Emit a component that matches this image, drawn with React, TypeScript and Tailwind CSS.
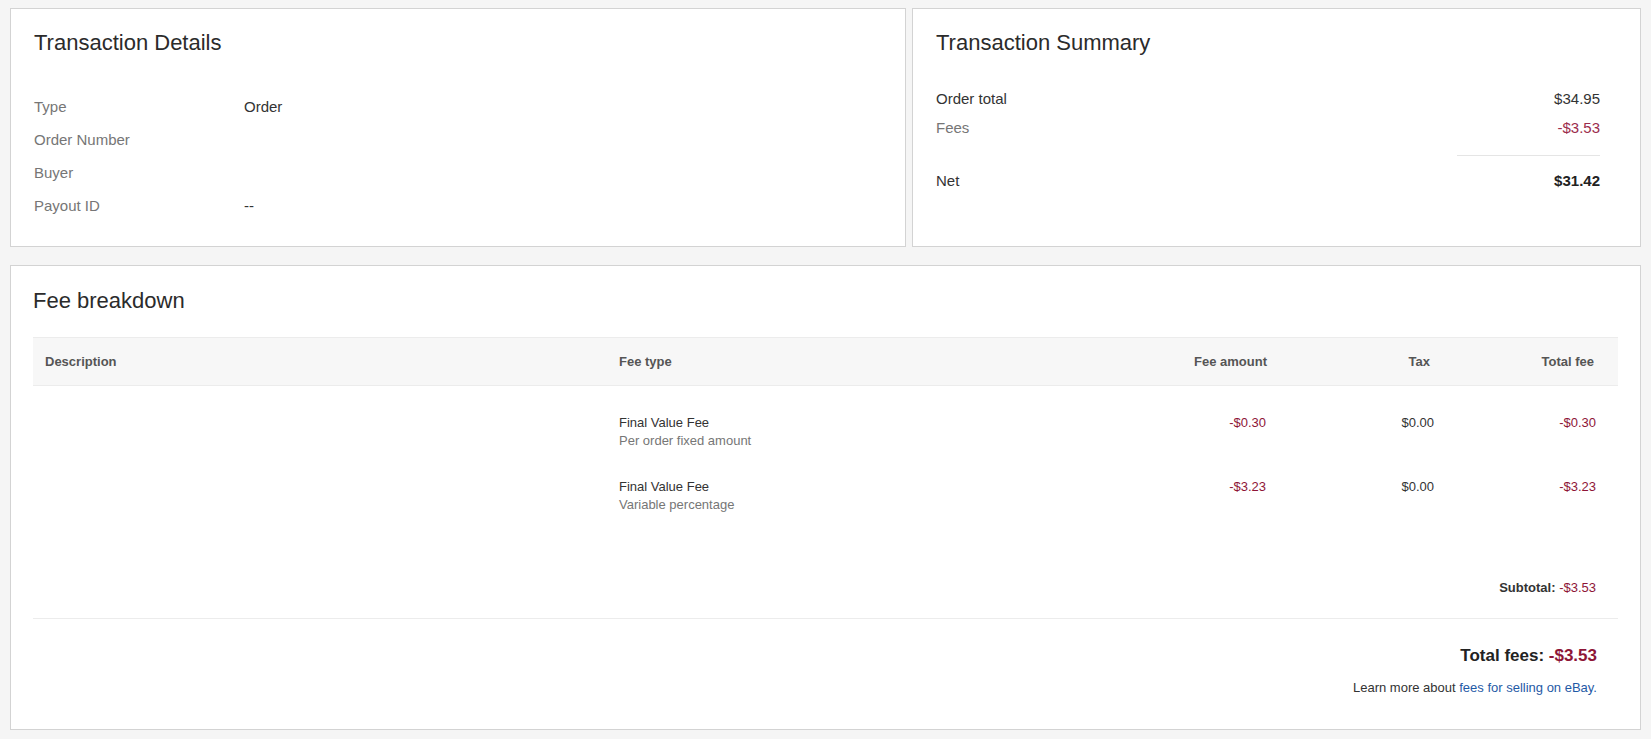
import React from "react";

const RED = "text-[#8e1537]";

function DetailRow({ label, value }: { label: string; value?: string }) {
  return (
    <div className="flex h-[33px] items-center text-[15px]">
      <div className="w-[210px] text-[#767676]">{label}</div>
      <div className="text-[#333333]">{value}</div>
    </div>
  );
}

function FeeRow({ amount }: { amount: { type: string; sub: string; fee: string; tax: string; total: string } }) {
  return (
    <div className="grid grid-cols-[574px_393px_279px_163px_1fr] pt-[11px] pb-[17px] text-[13px] leading-[18px]">
      <div className="pl-3"></div>
      <div className="pl-3">
        <div className="text-[#333333]">{amount.type}</div>
        <div className="text-[#767676]">{amount.sub}</div>
      </div>
      <div className={`pr-[13px] text-right ${RED}`}>{amount.fee}</div>
      <div className="pr-[8px] text-right text-[#333333]">{amount.tax}</div>
      <div className={`pr-[22px] text-right ${RED}`}>{amount.total}</div>
    </div>
  );
}

export default function App() {
  const rows = [
    { type: "Final Value Fee", sub: "Per order fixed amount", fee: "-$0.30", tax: "$0.00", total: "-$0.30" },
    { type: "Final Value Fee", sub: "Variable percentage", fee: "-$3.23", tax: "$0.00", total: "-$3.23" },
  ];
  return (
    <div
      className="min-h-[739px] bg-[#f5f5f5] px-[10px] pt-[8px] pb-[10px] text-[#333333]"
      style={{ fontFamily: '"Liberation Sans", Arial, sans-serif' }}
    >
      <div className="grid grid-cols-[896px_1fr] gap-[6px]">
        <div className="h-[239px] border border-[#d3d3d3] bg-white pl-[23px] pt-[20px]">
          <h2 className="text-[22px] leading-[28px] text-[#2b2b2b]">Transaction Details</h2>
          <div className="mt-[34px]">
            <DetailRow label="Type" value="Order" />
            <DetailRow label="Order Number" />
            <DetailRow label="Buyer" />
            <DetailRow label="Payout ID" value="--" />
          </div>
        </div>
        <div className="h-[239px] border border-[#d3d3d3] bg-white pl-[23px] pr-[40px] pt-[20px]">
          <h2 className="text-[22px] leading-[28px] text-[#2b2b2b]">Transaction Summary</h2>
          <div className="mt-[28px] text-[15px]">
            <div className="flex h-[29px] items-center justify-between">
              <span className="text-[#333333]">Order total</span>
              <span className="text-[#333333]">$34.95</span>
            </div>
            <div className="flex h-[29px] items-center justify-between">
              <span className="text-[#767676]">Fees</span>
              <span className="text-[#9b2c4c]">-$3.53</span>
            </div>
            <div className="ml-auto mt-[12px] h-px w-[143px] bg-[#e5e5e5]"></div>
            <div className="mt-[11px] flex h-[29px] items-center justify-between">
              <span className="text-[#333333]">Net</span>
              <span className="font-bold text-[#222222]">$31.42</span>
            </div>
          </div>
        </div>
      </div>

      <div className="mt-[18px] h-[465px] border border-[#d3d3d3] bg-white px-[22px] pt-[21px]">
        <h2 className="text-[22px] leading-[28px] text-[#2b2b2b]">Fee breakdown</h2>
        <div className="mt-[22px]">
          <div className="grid h-[49px] grid-cols-[574px_393px_279px_163px_1fr] items-center border-y border-[#ececec] bg-[#f7f7f7] text-[13px] font-bold text-[#555555]">
            <div className="pl-3">Description</div>
            <div className="pl-3">Fee type</div>
            <div className="pr-3 text-right">Fee amount</div>
            <div className="pr-3 text-right">Tax</div>
            <div className="pr-[24px] text-right">Total fee</div>
          </div>
          <div className="pt-[17px]">
            {rows.map((r, i) => (
              <FeeRow key={i} amount={r} />
            ))}
          </div>
          <div className="mt-[48px] pr-[22px] text-right text-[13px] leading-[18px]">
            <span className="font-bold text-[#333333]">Subtotal: </span>
            <span className={RED}>-$3.53</span>
          </div>
          <div className="mt-[21px] h-px bg-[#ececec]"></div>
          <div className="mt-[25px] pr-[21px] text-right text-[17px] font-bold leading-[24px]">
            <span className="text-[#222222]">Total fees: </span>
            <span className={RED}>-$3.53</span>
          </div>
          <div className="mt-[11px] pr-[21px] text-right text-[13px] leading-[18px] text-[#333333]">
            Learn more about <a className="text-[#1f5aa6]">fees for selling on eBay.</a>
          </div>
        </div>
      </div>
    </div>
  );
}
